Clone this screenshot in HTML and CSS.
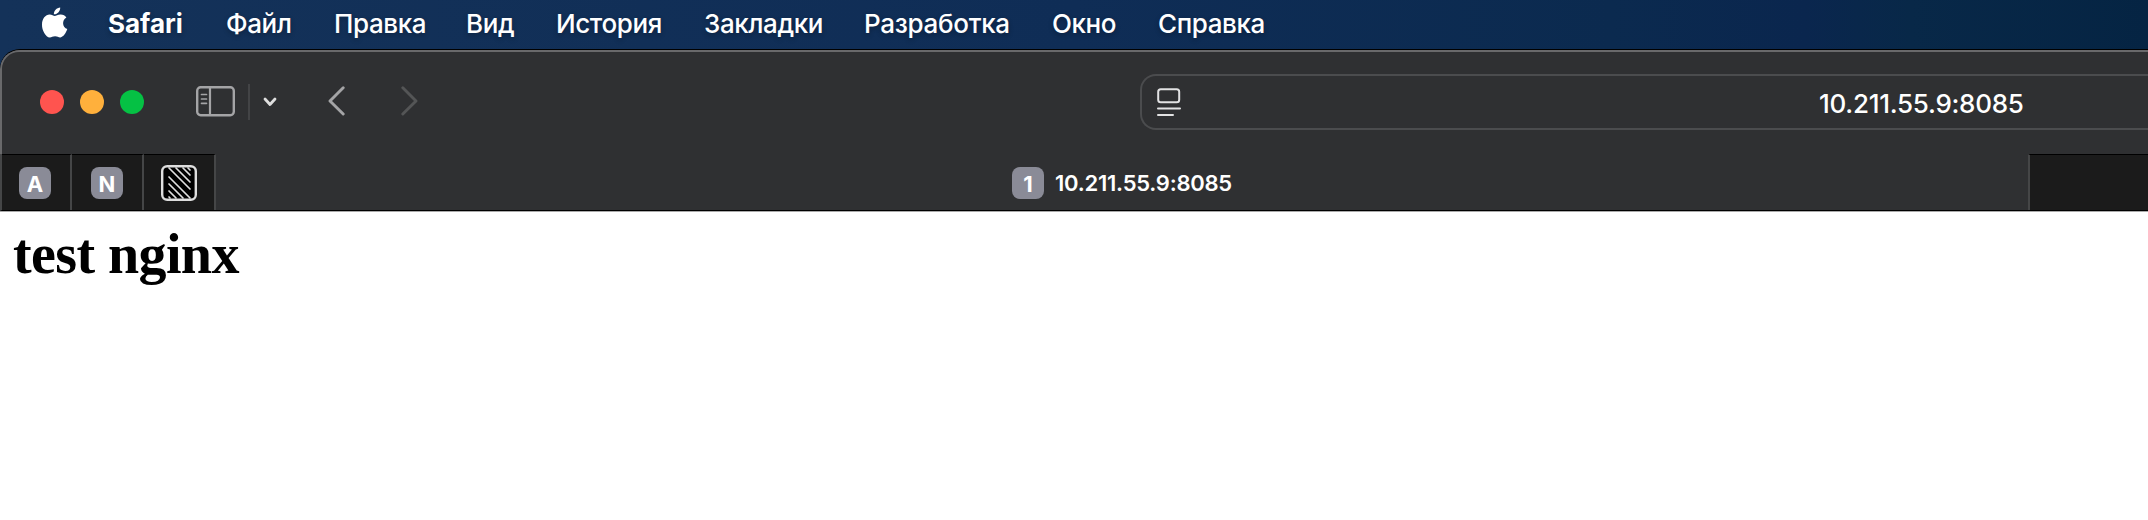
FILE: index.html
```html
<!DOCTYPE html>
<html lang="ru">
<head>
<meta charset="utf-8">
<title>10.211.55.9:8085</title>
<link rel="stylesheet" href="styles.css">
</head>
<body>
<nav class="menubar">
  <svg class="apple" width="28" height="34" viewBox="0 0 28 34"><path fill="#fff" d="M19.2 1.4c.3 3.3-2.9 7.2-6.300 6.900C12.500 5 15.800 1.500 19.200 1.400zM13.700 10c1.300 0 3.200-1.600 6-1.500 2.500.1 4.500 1.200 5.700 3-4.900 3-4.100 9.700.9 11.600-1 2.900-3.700 8.200-6.900 8.300-2 .1-2.800-1.200-5.300-1.200s-3.400 1.200-5.300 1.200C4.700 31.400.8 24 1 18.400c.1-5.700 3.400-9.700 7.700-9.800 2.100 0 3.900 1.400 5 1.400z"/></svg>
  <span class="menu app">Safari</span>
  <span class="menu file">Файл</span>
  <span class="menu edit">Правка</span>
  <span class="menu view">Вид</span>
  <span class="menu history">История</span>
  <span class="menu bookmarks">Закладки</span>
  <span class="menu develop">Разработка</span>
  <span class="menu window-menu">Окно</span>
  <span class="menu help">Справка</span>
</nav>
<div class="window">
  <header class="toolbar">
    <div class="lights"><i class="light red"></i><i class="light yellow"></i><i class="light green"></i></div>
    <svg class="sidebar-icon" width="39" height="31" viewBox="0 0 39 31" fill="none" stroke="#a4a4a6"><rect x="1.200" y="1.200" width="36.600" height="28" rx="3.500" stroke-width="2.400"/><path d="M14 1v28" stroke-width="2.200"/><path d="M5.500 8.500h5M5.500 13h5M5.500 17.300h5" stroke-width="1.700" stroke-linecap="round"/></svg>
    <i class="divider"></i>
    <svg class="chevron" width="14" height="10" viewBox="0 0 14 10"><path d="M2 2l5 5.500L12 2" fill="none" stroke="#dedede" stroke-width="2.800" stroke-linecap="round" stroke-linejoin="round"/></svg>
    <svg class="back" width="17" height="30" viewBox="0 0 17 30"><path d="M15.200 1.800L2 15l13.200 13" fill="none" stroke="#a4a4a6" stroke-width="2.900" stroke-linecap="round" stroke-linejoin="round"/></svg>
    <svg class="forward" width="17" height="30" viewBox="0 0 17 30"><path d="M1.800 1.800L15 15 1.800 28" fill="none" stroke="#545556" stroke-width="2.900" stroke-linecap="round" stroke-linejoin="round"/></svg>
    <div class="address">
      <svg class="reader" width="24" height="28" viewBox="0 0 24 28" fill="none" stroke="#e2e2e3" stroke-width="2" stroke-linecap="round"><rect x="1.200" y="1.200" width="21" height="13" rx="2.500"/><path d="M1 20.500h22M1 27h15"/></svg>
      <span class="url">10.211.55.9:8085</span>
    </div>
  </header>
  <div class="tabs">
    <div class="pinned first"><b class="badge">A</b></div>
    <div class="pinned"><b class="badge">N</b></div>
    <div class="pinned">
      <svg width="36" height="36" viewBox="0 0 36 36"><rect x="1.200" y="1.200" width="33.600" height="33.600" rx="5" fill="#000" stroke="#dedede" stroke-width="2.400"/><path fill="none" stroke="#dedede" stroke-width="1.700" stroke-linecap="round" d="M8 3l21 21M15 3l14 14M22 3l7 7M27 3l2 2M8 12l21 21M8 19l14 14M8 26l7 7M8 32l1 1"/></svg>
    </div>
    <div class="tab"><b class="badge">1</b><span class="tab-title">10.211.55.9:8085</span></div>
    <div class="rest"></div>
  </div>
  <main class="page"><h1>test nginx</h1></main>
</div>
</body>
</html>
```
FILE: styles.css
```css
* { box-sizing: border-box; }
body { margin: 0; width: 2148px; height: 520px; overflow: hidden; font-family: Inter, "Liberation Sans", sans-serif; background: linear-gradient(90deg, #143259 0, #0f2d56 50%, #0b2a4f 75%, #0a264e 84%, #082848 89%, #052443 100%); }
.menubar { display: flex; height: 49px; padding-left: 41px; color: #fff; font-size: 26px; line-height: 47px; font-weight: 500; white-space: nowrap; text-shadow: 0 2px 5px rgba(0,0,0,.3); }
.apple { margin: 6px 39px 0 0; flex: none; }
.menu { flex: none; letter-spacing: -.4px; }
.app { width: 118px; font-weight: 700; letter-spacing: 0; }
.file { width: 108px; }
.edit { width: 132px; }
.view { width: 90px; }
.history { width: 148px; }
.bookmarks { width: 160px; }
.develop { width: 188px; letter-spacing: -.3px; }
.window-menu { width: 106px; }
.window { height: 471px; border-top: 1px solid #000; border-radius: 20px 0 0; overflow: hidden; background: #2f3032; }
.toolbar { display: flex; height: 104px; border: solid #69696b; border-width: 2px 0 0 2px; border-radius: 19px 0 0; padding-left: 38px; }
.lights { display: flex; gap: 16px; margin-top: 38px; }
.light { width: 24px; height: 24px; border-radius: 50%; }
.red { background: #ff544f; }
.yellow { background: #ffb03c; }
.green { background: #05c144; }
.sidebar-icon { margin: 34px 0 0 52px; }
.divider { width: 2px; height: 36px; background: #434446; margin: 32px 0 0 13px; }
.chevron { margin: 45px 0 0 13px; }
.back { margin: 34px 0 0 51px; }
.forward { margin: 34px 0 0 56px; }
.address { display: flex; flex: 1; margin: 22px 0 0 722px; height: 56px; border: 2px solid #4b4c4e; border-right: 0; border-radius: 16px 0 0 16px; padding-left: 15px; }
.reader { margin-top: 12px; flex: none; }
.url { margin-left: 638px; color: #fff; font-size: 26px; font-weight: 500; line-height: 55px; letter-spacing: -.27px; white-space: nowrap; }
.tabs { display: flex; height: 57px; border-left: 2px solid #454647; border-bottom: 1px solid #000; }
.pinned { display: flex; align-items: center; justify-content: center; width: 72px; padding-top: 1px; background: #1b1b1b; border-top: 1px solid #000; border-right: 2px solid #454647; }
.first { width: 70px; padding-right: 2px; }
.badge { display: flex; align-items: center; justify-content: center; width: 32px; height: 32px; padding-top: 1px; border-radius: 8px; background: #8a8b97; color: #fff; font-size: 22px; font-weight: 700; }
.tab { display: flex; align-items: center; justify-content: center; gap: 11px; width: 1812px; padding-top: 2px; }
.tab-title { color: #fff; font-size: 22px; font-weight: 600; letter-spacing: -.25px; }
.rest { flex: 1; background: #1b1b1b; border-top: 1px solid #000; border-left: 2px solid #454647; }
.page { height: 310px; border-top: 1px solid #aaa; background: #fff; padding: 10px 13px; color: #000; font-family: "Liberation Serif", serif; }
.page h1 { margin: 0; font-size: 56px; line-height: 64px; font-weight: 700; letter-spacing: -.6px; }
```
